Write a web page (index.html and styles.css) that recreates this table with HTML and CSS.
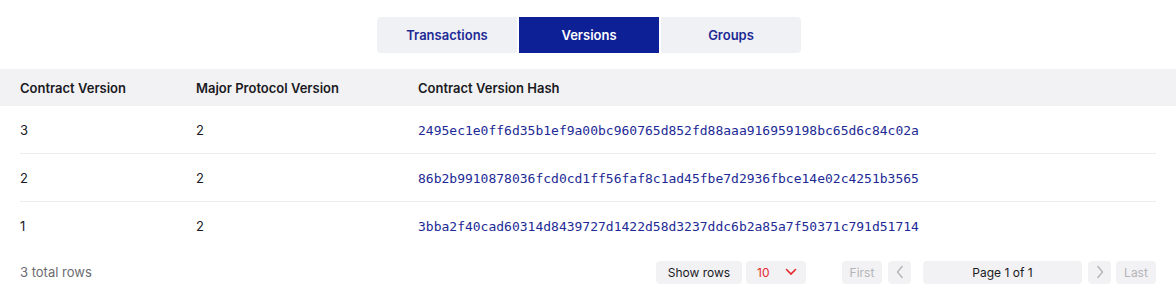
FILE: index.html
```html
<!DOCTYPE html>
<html lang="en">
<head>
  <meta charset="UTF-8" />
  <title>Contract versions</title>
  <link rel="stylesheet" href="styles.css">
</head>
<body>
  <!-- Tabs -->
  <nav class="tabs">
    <button class="tab">Transactions</button>
    <button class="tab active">Versions</button>
    <button class="tab">Groups</button>
  </nav>

  <!-- Versions table -->
  <table class="versions">
    <thead>
      <tr>
        <th class="col-version">Contract Version</th>
        <th class="col-major">Major Protocol Version</th>
        <th>Contract Version Hash</th>
      </tr>
    </thead>
    <tbody>
      <tr>
        <td>3</td>
        <td>2</td>
        <td><a class="hash" href="#">2495ec1e0ff6d35b1ef9a00bc960765d852fd88aaa916959198bc65d6c84c02a</a></td>
      </tr>
      <tr>
        <td>2</td>
        <td>2</td>
        <td><a class="hash" href="#">86b2b9910878036fcd0cd1ff56faf8c1ad45fbe7d2936fbce14e02c4251b3565</a></td>
      </tr>
      <tr>
        <td>1</td>
        <td>2</td>
        <td><a class="hash" href="#">3bba2f40cad60314d8439727d1422d58d3237ddc6b2a85a7f50371c791d51714</a></td>
      </tr>
    </tbody>
  </table>

  <!-- Footer / paginación -->
  <footer class="table-footer">
    <span class="total">3 total rows</span>
    <div class="pager">
      <span class="pill show-rows">Show rows</span>
      <span class="pill select">10
        <svg width="14" height="14" viewBox="0 0 14 14"><path d="M2.5 4.5 7 9l4.5-4.5" fill="none" stroke="#e5262b" stroke-width="1.6" stroke-linecap="round"/></svg>
      </span>
      <span class="pill disabled first">First</span>
      <span class="pill disabled arrow">
        <svg width="10" height="16" viewBox="0 0 10 16"><path d="M7.5 2 2.5 8l5 6" fill="none" stroke="#b4b4b8" stroke-width="1.4"/></svg>
      </span>
      <span class="pill page">Page 1 of 1</span>
      <span class="pill disabled arrow">
        <svg width="10" height="16" viewBox="0 0 10 16"><path d="M2.5 2 7.5 8l-5 6" fill="none" stroke="#b4b4b8" stroke-width="1.4"/></svg>
      </span>
      <span class="pill disabled last">Last</span>
    </div>
  </footer>
</body>
</html>
```

FILE: styles.css
```css
* {
  margin: 0;
  padding: 0;
  box-sizing: border-box;
}

body {
  font-family: 'Inter', 'Liberation Sans', sans-serif;
  font-size: 13px;
  color: #1a1a1f;
  background: #fff;
  width: 1176px;
  height: 298px;
  overflow: hidden;
}

.tabs {
  display: flex;
  justify-content: center;
  gap: 2px;
  padding-top: 17px;
  padding-left: 2px;
  height: 69px;
}

.tab {
  width: 140px;
  height: 36px;
  border: none;
  background: #f0f1f4;
  color: #1d2a96;
  font-family: inherit;
  font-size: 13px;
  font-weight: 600;
}

.tab:first-child {
  border-radius: 4px 0 0 4px;
}

.tab:last-child {
  border-radius: 0 4px 4px 0;
}

.tab.active {
  background: #0e2095;
  color: #fff;
}

.versions {
  width: 100%;
  border-collapse: collapse;
}

.versions thead tr {
  background: #f2f2f4;
}

.versions th {
  height: 37px;
  text-align: left;
  font-weight: 600;
  font-size: 13px;
  color: #1a1a1f;
  padding: 0;
}

.versions th:first-child,
.versions td:first-child {
  padding-left: 20px;
}

.col-version {
  width: 196px;
}

.col-major {
  width: 222px;
}

.versions td {
  height: 48px;
  padding: 0 0 1px;
  background-image: linear-gradient(#ececef, #ececef);
  background-repeat: no-repeat;
  background-size: 100% 1px;
  background-position: bottom;
}

.versions td:first-child {
  background-position: 20px 100%;
}

.versions td:last-child {
  background-size: calc(100% - 20px) 1px;
  background-position: 0 100%;
}

.versions tbody tr:last-child td {
  background-image: none;
}

.hash {
  font-family: 'DejaVu Sans Mono', monospace;
  font-size: 13px;
  color: #1d2a96;
  text-decoration: none;
}

.table-footer {
  display: flex;
  justify-content: space-between;
  align-items: center;
  padding: 0 20px;
  margin-top: 2px;
  height: 40px;
}

.total {
  color: #6b6b70;
}

.pager {
  display: flex;
  align-items: center;
  gap: 4px;
}

.pill {
  display: flex;
  align-items: center;
  justify-content: center;
  height: 23px;
  background: #f2f2f4;
  border-radius: 4px;
  font-size: 12px;
  color: #1a1a1f;
}

.show-rows {
  width: 86px;
}

.select {
  width: 60px;
  justify-content: space-between;
  padding: 0 8px 0 11px;
  color: #e5262b;
}

.first {
  margin-left: 32px;
  width: 40px;
}

.disabled {
  color: #b4b4b8;
}

.arrow {
  width: 23px;
  margin-left: 2px;
}

.page {
  width: 159px;
  margin-left: 8px;
}

.last {
  width: 40px;
  margin-left: 1px;
}
```
